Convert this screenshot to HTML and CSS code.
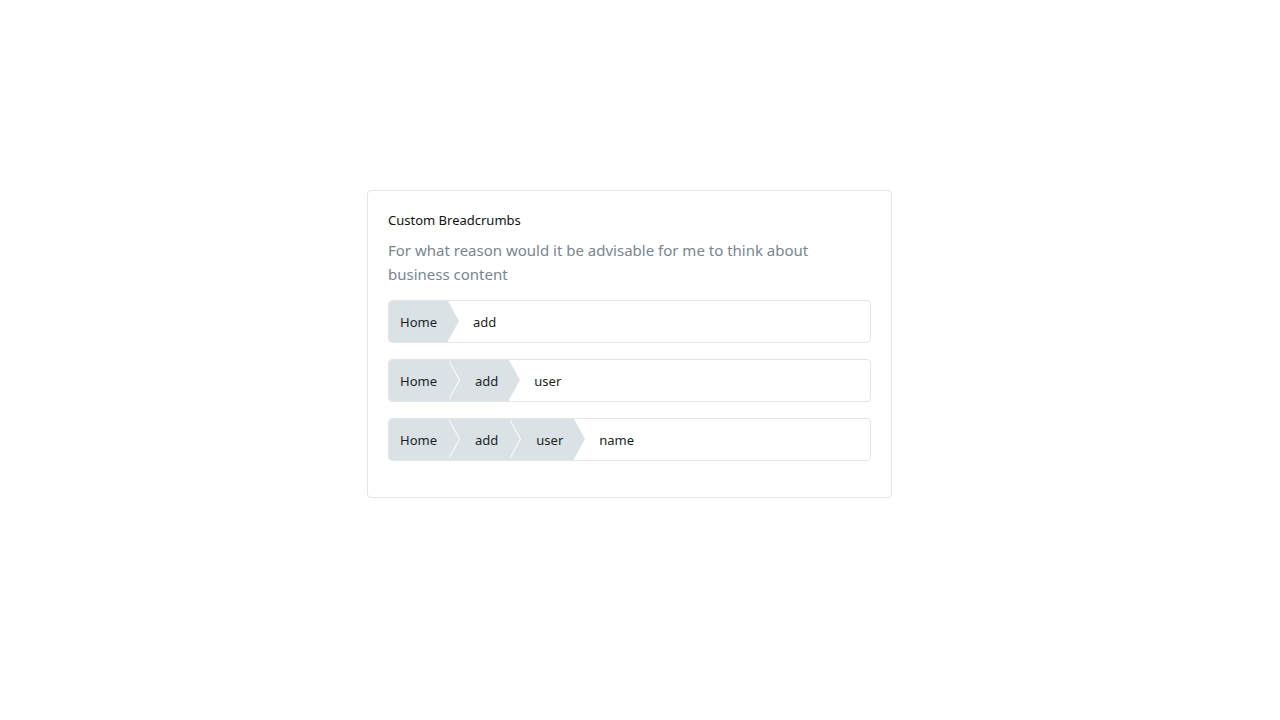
FILE: index.html
```html
<!DOCTYPE html>
<html lang="en">
<head>
<meta charset="utf-8">
<title>Custom Breadcrumbs</title>
<link rel="stylesheet" href="styles.css">
</head>
<body>
<div class="page">
  <div class="card">
    <h4 class="card-title">Custom Breadcrumbs</h4>
    <p class="card-desc">For what reason would it be advisable for me to think about business content</p>
    <ol class="crumbs">
      <li class="crumb">Home</li>
      <li class="crumb crumb-active">add</li>
    </ol>
    <ol class="crumbs">
      <li class="crumb">Home</li>
      <li class="crumb">add</li>
      <li class="crumb crumb-active">user</li>
    </ol>
    <ol class="crumbs">
      <li class="crumb">Home</li>
      <li class="crumb">add</li>
      <li class="crumb">user</li>
      <li class="crumb crumb-active">name</li>
    </ol>
  </div>
</div>
</body>
</html>
```

FILE: styles.css
```css
* { box-sizing: border-box; }
html, body { margin: 0; padding: 0; background: #fff; }
body {
  font-family: "Noto Sans", "Open Sans", "Liberation Sans", sans-serif;
  color: #212529;
}
.page {
  padding: 190px 0 0 367px;
}
.card {
  width: 525px;
  border: 1px solid #e3e6e9;
  border-radius: 4px;
  padding: 20px;
  background: #fff;
}
.card-title {
  margin: 0;
  font-size: 13px;
  font-weight: 400;
  line-height: 18px;
  color: #111;
}
.card-desc {
  margin: 9px 0 14px;
  font-size: 15px;
  line-height: 24px;
  color: #7a8590;
}
.crumbs {
  list-style: none;
  margin: 0 0 16px;
  padding: 0;
  height: 43px;
  display: flex;
  border: 1px solid #e3e6e9;
  border-radius: 4px;
  overflow: hidden;
}
.crumb {
  position: relative;
  display: flex;
  align-items: center;
  height: 41px;
  padding: 0 11px 0 27px;
  background: #dbe2e6;
  font-size: 13px;
  color: #1c1f22;
}
.crumb:first-child {
  padding-left: 11px;
}
.crumb::after {
  content: "";
  position: absolute;
  top: 0;
  right: -11px;
  border-top: 20.5px solid transparent;
  border-bottom: 20.5px solid transparent;
  border-left: 11px solid #dbe2e6;
  z-index: 2;
}
.crumb::before {
  content: "";
  position: absolute;
  top: 0;
  right: -12px;
  border-top: 20.5px solid transparent;
  border-bottom: 20.5px solid transparent;
  border-left: 11px solid #fff;
  z-index: 1;
}
.crumb-active {
  background: transparent;
  padding-left: 25px;
}
.crumb-active::after,
.crumb-active::before {
  display: none;
}
```
